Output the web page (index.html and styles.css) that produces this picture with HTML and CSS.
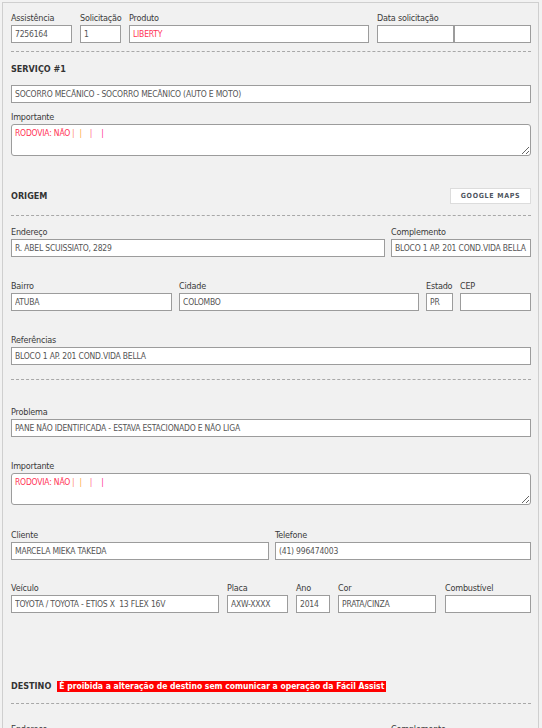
FILE: index.html
```html
<!DOCTYPE html>
<html lang="pt-BR">
<head>
<meta charset="utf-8">
<title>Serviço</title>
<link rel="stylesheet" href="styles.css">
</head>
<body>
<div class="panel">
  <div class="row g8 mt0">
    <div class="f w61"><label>Assistência</label><input class="in" readonly value="7256164"></div>
    <div class="f w41"><label>Solicitação</label><input class="in" readonly value="1"></div>
    <div class="f w240"><label>Produto</label><input class="in red" readonly value="LIBERTY"></div>
    <div class="f w154"><label>Data solicitação</label>
      <div class="pair"><input class="in" readonly value=""><input class="in" readonly value=""></div>
    </div>
  </div>
  <div class="dash mt8"></div>
  <h3 class="sec mt11">SERVIÇO #1</h3>
  <div class="mt10"><input class="in full" readonly value="SOCORRO MECÂNICO - SOCORRO MECÂNICO (AUTO E MOTO)"></div>
  <div class="f mt8"><label>Importante</label>
    <div class="area"><span class="rod">RODOVIA: NÃO</span><span class="pp p1">|</span><span class="pp p2">|</span><span class="pp p3">|</span><span class="pp p4">|</span></div>
  </div>

  <div class="sec-row mt32"><h3 class="sec">ORIGEM</h3><button class="gmaps" type="button">GOOGLE MAPS</button></div>
  <div class="dash mt11"></div>
  <div class="row g6 mt10">
    <div class="f w374"><label>Endereço</label><input class="in" readonly value="R. ABEL SCUISSIATO, 2829"></div>
    <div class="f grow"><label>Complemento</label><input class="in" readonly value="BLOCO 1 AP. 201 COND.VIDA BELLA"></div>
  </div>
  <div class="row g7 mt23">
    <div class="f w161"><label>Bairro</label><input class="in" readonly value="ATUBA"></div>
    <div class="f w240"><label>Cidade</label><input class="in" readonly value="COLOMBO"></div>
    <div class="f w27"><label>Estado</label><input class="in" readonly value="PR"></div>
    <div class="f grow"><label>CEP</label><input class="in" readonly value=""></div>
  </div>
  <div class="f mt23"><label>Referências</label><input class="in full" readonly value="BLOCO 1 AP. 201 COND.VIDA BELLA"></div>
  <div class="dash mt14"></div>

  <div class="f mt26"><label>Problema</label><input class="in full" readonly value="PANE NÃO IDENTIFICADA - ESTAVA ESTACIONADO E NÃO LIGA"></div>
  <div class="f mt23"><label>Importante</label>
    <div class="area"><span class="rod">RODOVIA: NÃO</span><span class="pp p1">|</span><span class="pp p2">|</span><span class="pp p3">|</span><span class="pp p4">|</span></div>
  </div>
  <div class="row g6 mt24">
    <div class="f w258"><label>Cliente</label><input class="in" readonly value="MARCELA MIEKA TAKEDA"></div>
    <div class="f grow"><label>Telefone</label><input class="in" readonly value="(41) 996474003"></div>
  </div>
  <div class="row g8 mt22">
    <div class="f w208"><label>Veículo</label><input class="in" readonly value="TOYOTA / TOYOTA - ETIOS X  13 FLEX 16V"></div>
    <div class="f w61"><label>Placa</label><input class="in" readonly value="AXW-XXXX"></div>
    <div class="f w34"><label>Ano</label><input class="in" readonly value="2014"></div>
    <div class="f w98"><label>Cor</label><input class="in" readonly value="PRATA/CINZA"></div>
    <div class="f grow ml1"><label>Combustível</label><input class="in" readonly value=""></div>
  </div>

  <div class="sec-row left mt67"><h3 class="sec">DESTINO</h3><span class="warn">É proibida a alteração de destino sem comunicar a operação da Fácil Assist</span></div>
  <div class="dash mt11"></div>
  <div class="row g6 mt19">
    <div class="f w374"><label>Endereço</label><input class="in" readonly value=""></div>
    <div class="f grow"><label>Complemento</label><input class="in" readonly value=""></div>
  </div>
</div>
</body>
</html>
```

FILE: styles.css
```css
html { overflow: hidden; }
body {
  margin: 0;
  background: #f2f2f2;
  font-family: "DejaVu Sans Condensed", "DejaVu Sans", sans-serif;
}
.panel {
  margin: 2px 3px 0 2px;
  border: 1px solid #cfcfcf;
  border-bottom: none;
  background: #f1f1f1;
  padding: 9px 7px 40px 8px;
}
.row { display: flex; }
.g6 { gap: 6px; }
.g7 { gap: 7px; }
.g8 { gap: 8px; }
.f { display: flex; flex-direction: column; }
.grow { flex: 1; min-width: 0; }
.ml1 { margin-left: 1px; }
.w27 { width: 27px; }
.w34 { width: 34px; }
.w41 { width: 41px; }
.w61 { width: 61px; }
.w98 { width: 98px; }
.w154 { width: 154px; }
.w161 { width: 161px; }
.w208 { width: 208px; }
.w240 { width: 240px; }
.w258 { width: 258px; }
.w374 { width: 374px; }

label {
  display: block;
  height: 13px;
  font-size: 9px;
  line-height: 13px;
  color: #3a3a3a;
  letter-spacing: -0.2px;
  white-space: nowrap;
}
.in {
  display: block;
  width: 100%;
  height: 18px;
  box-sizing: border-box;
  margin: 0;
  border: 1px solid #9c9c9c;
  border-radius: 0;
  background: #fff;
  padding: 0 3px;
  font-family: inherit;
  font-size: 8.5px;
  letter-spacing: -0.2px;
  color: #555;
  outline: none;
}
.in.red { color: #ff3355; }
.pair { display: flex; }
.pair .in { width: 50%; }

.dash {
  height: 0;
  border-top: 1px dashed #a8a8a8;
}
.sec {
  margin: 0;
  font-size: 9px;
  line-height: 12px;
  font-weight: bold;
  color: #333;
}
.sec-row {
  display: flex;
  align-items: center;
  justify-content: space-between;
}
.sec-row.left { justify-content: flex-start; gap: 6px; }
.gmaps {
  width: 81px;
  height: 16px;
  margin: 0;
  padding: 0;
  border: 1px solid #dcdcdc;
  background: #fff;
  font-family: inherit;
  font-size: 7px;
  font-weight: bold;
  letter-spacing: 0.7px;
  color: #4e5560;
}
.area {
  height: 32px;
  box-sizing: border-box;
  border: 1px solid #9c9c9c;
  border-radius: 3px;
  background: #fff;
  padding: 3px 3px;
  font-size: 8.5px;
  line-height: 11px;
  letter-spacing: -0.2px;
  overflow: auto;
  resize: vertical;
  white-space: pre;
}
.rod { color: #ff3355; }
.pp { display: inline-block; }
.p1 { color: #ff8a6a; margin-left: 2px; }
.p2 { color: #ffaa44; margin-left: 5px; }
.p3 { color: #ff6688; margin-left: 8px; }
.p4 { color: #ff3399; margin-left: 9px; }
.warn {
  background: #ff0000;
  color: #fff;
  font-size: 8.5px;
  font-weight: bold;
  line-height: 11px;
  padding: 0 2px;
  white-space: nowrap;
}

.mt0 { margin-top: 0; }
.mt8 { margin-top: 8px; }
.mt10 { margin-top: 10px; }
.mt11 { margin-top: 11px; }
.mt14 { margin-top: 14px; }
.mt19 { margin-top: 19px; }
.mt22 { margin-top: 22px; }
.mt23 { margin-top: 23px; }
.mt24 { margin-top: 24px; }
.mt26 { margin-top: 26px; }
.mt32 { margin-top: 32px; }
.mt67 { margin-top: 67px; }
```
